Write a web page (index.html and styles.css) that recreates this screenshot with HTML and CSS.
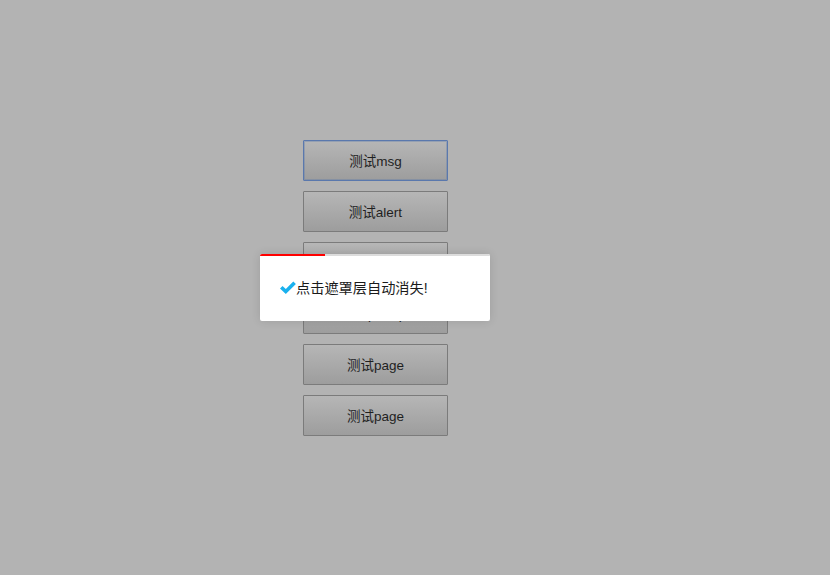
FILE: index.html
```html
<!DOCTYPE html>
<html lang="zh">
<head>
<meta charset="utf-8">
<title>测试</title>
<link rel="stylesheet" href="styles.css">
</head>
<body>
<div class="page">
  <button class="btn btn-focus">测试msg</button>
  <button class="btn">测试alert</button>
  <button class="btn">测试confirm</button>
  <button class="btn">测试prompt</button>
  <button class="btn">测试page</button>
  <button class="btn">测试page</button>
</div>
<div class="toast">
  <div class="progress"><div class="progress-fill" style="width:65px"></div></div>
  <div class="toast-body">
    <svg class="check" width="16" height="14" viewBox="0 0 16 14">
      <path d="M0 7.4 L2.5 4.9 L5.8 8.1 L13.3 0.4 L15.9 2.9 L5.8 13.1 Z" fill="#1ab1ee"/>
    </svg>
    <span class="msg">点击遮罩层自动消失!</span>
  </div>
</div>
</body>
</html>
```
FILE: styles.css
```css
html, body {
  margin: 0;
  padding: 0;
  height: 100%;
  background: #b3b3b3;
  font-family: "Liberation Sans", Arial, "Noto Sans CJK SC", sans-serif;
}
.page {
  display: flex;
  flex-direction: column;
  gap: 10px;
  padding: 140px 0 0 303px;
}
.btn {
  width: 145px;
  height: 41px;
  border: 1px solid #7b7b7b;
  border-radius: 1px;
  background: linear-gradient(#b6b6b6, #9d9d9d);
  color: #1f1f1f;
  font-family: "Liberation Sans", Arial, "Noto Sans CJK SC", sans-serif;
  font-size: 13.5px;
  padding: 0 0 2px 0;
  margin: 0;
}
.btn-focus {
  border-color: #5a78ad;
  box-shadow: inset 0 0 0 1px rgba(90, 120, 173, 0.35);
}
.toast {
  position: absolute;
  left: 260px;
  top: 254px;
  width: 230px;
  height: 67px;
  background: #ffffff;
  border-radius: 2px;
  box-shadow: 0 0 10px rgba(0, 0, 0, 0.12);
  overflow: hidden;
}
.progress {
  height: 2px;
  background: #dcdcdc;
}
.progress-fill {
  height: 2px;
  background: #ff0000;
}
.toast-body {
  display: flex;
  align-items: center;
  padding: 23px 0 0 20px;
}
.check {
  display: block;
  margin-right: 0;
}
.msg {
  font-size: 14.2px;
  color: #1a1a1a;
  line-height: 18px;
  font-family: "Liberation Sans", Arial, "Noto Sans CJK SC", sans-serif;
}
```
